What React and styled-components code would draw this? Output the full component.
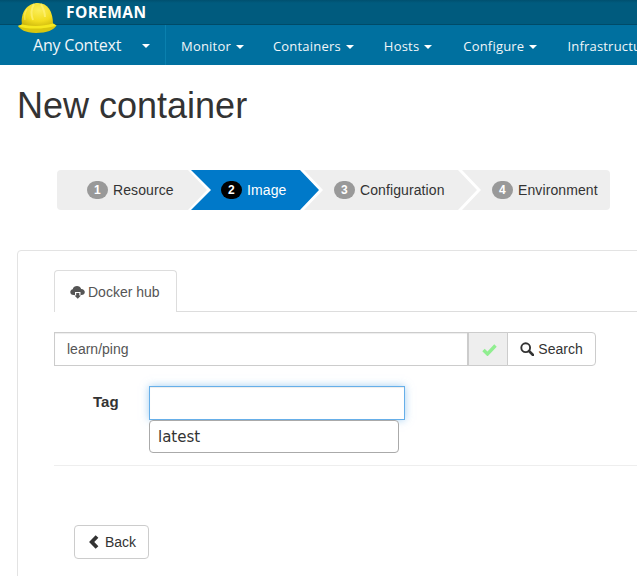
import React from 'react';
import styled, { createGlobalStyle } from 'styled-components';

const GlobalStyle = createGlobalStyle`
  html, body {
    margin: 0;
    background: #fff;
    overflow: hidden;
  }
  body {
    font-family: "Liberation Sans", Arial, sans-serif;
    font-size: 14px;
    color: #363636;
  }
`;

const Page = styled('div')`
  width: 637px;
  height: 576px;
  overflow: hidden;
  position: relative;
`;

const Helmet = styled('svg')`
  position: absolute;
  left: 17px;
  top: 1px;
`;

const TopBar = styled('div')`
  height: 24px;
  background: linear-gradient(#00506f 0, #005b7e 3px, #005b7e 100%);
  border-bottom: 1px solid #004b68;
  box-sizing: content-box;
  display: flex;
  align-items: center;
  padding-left: 66px;
`;

const Brand = styled('span')`
  font-family: "Open Sans", sans-serif;
  font-weight: 700;
  font-size: 15.5px;
  letter-spacing: 0.4px;
  color: #fff;
`;

const NavBar = styled('nav')`
  height: 40px;
  background: #00709f;
  display: flex;
  align-items: stretch;
  white-space: nowrap;
  font-family: "Open Sans", sans-serif;
  color: #f1f6f9;
`;

const ContextMenu = styled('div')`
  flex-shrink: 0;
  width: 132px;
  padding-left: 33px;
  border-right: 1px solid #0a80ae;
  display: flex;
  align-items: center;
  font-size: 16px;
  font-weight: 500;
  letter-spacing: -0.2px;
`;

const Caret = styled('i')`
  display: inline-block;
  width: 0;
  height: 0;
  margin-left: ${p => p.$gap || 5}px;
  margin-top: 2px;
  border-left: 4px solid transparent;
  border-right: 4px solid transparent;
  border-top: 4px solid #fff;
`;

const NavItem = styled('div')`
  flex-shrink: 0;
  display: flex;
  align-items: center;
  padding-top: 1px;
  font-size: 13px;
  font-weight: 500;
  letter-spacing: 0.2px;
  margin-left: ${p => p.$left}px;
`;

const Title = styled('h1')`
  margin: 0;
  padding: 20px 0 0 17px;
  font-size: 36px;
  line-height: 42px;
  font-weight: 400;
  color: #333;
`;

const Wizard = styled('ol')`
  list-style: none;
  margin: 43px 0 0 57px;
  padding: 0;
  display: flex;
  width: 553px;
  height: 40px;
`;

const Step = styled('li')`
  box-sizing: border-box;
  flex-shrink: 0;
  width: ${p => p.$width}px;
  margin-left: ${p => p.$overlap || 0}px;
  padding-left: ${p => p.$pad}px;
  display: flex;
  align-items: center;
  gap: 5px;
  letter-spacing: 0.1px;
  background: ${p => p.$active ? '#0079c9' : '#eee'};
  color: ${p => p.$active ? '#fff' : '#333'};
  border-radius: ${p => p.$radius || '0'};
  clip-path: ${p => p.$shape};
`;

const Badge = styled('span')`
  width: 21px;
  height: 18px;
  border-radius: 9px;
  background: ${p => p.$active ? '#000' : '#999'};
  color: #fff;
  font-size: 12px;
  font-weight: 700;
  line-height: 18px;
  text-align: center;
`;

const Panel = styled('section')`
  margin: 40px 0 0 17px;
  width: 640px;
  height: 340px;
  box-sizing: border-box;
  border: 1px solid #e3e3e3;
  border-radius: 4px;
  padding: 19px 0 0 36px;
`;

const Tabs = styled('div')`
  height: 42px;
  border-bottom: 1px solid #ddd;
  box-sizing: border-box;
`;

const Tab = styled('div')`
  box-sizing: border-box;
  width: 123px;
  height: 42px;
  border: 1px solid #ddd;
  border-bottom: 0;
  border-radius: 4px 4px 0 0;
  background: #fff;
  color: #555;
  display: flex;
  align-items: center;
  gap: 3px;
  padding-left: 15px;
`;

const SearchRow = styled('div')`
  display: flex;
  margin-top: 20px;
  height: 34px;
`;

const SearchInput = styled('div')`
  box-sizing: border-box;
  width: 414px;
  border: 1px solid #ccc;
  box-shadow: inset 0 1px 1px rgba(0, 0, 0, 0.075);
  padding-left: 12px;
  display: flex;
  align-items: center;
  color: #555;
`;

const Addon = styled('div')`
  box-sizing: border-box;
  width: 40px;
  padding-left: 3px;
  background: #eee;
  border: 1px solid #ccc;
  display: flex;
  align-items: center;
  justify-content: center;
`;

const SearchButton = styled('button')`
  box-sizing: border-box;
  width: 89px;
  padding: 0;
  margin-left: -1px;
  background: #fff;
  border: 1px solid #ccc;
  border-radius: 0 4px 4px 0;
  font: inherit;
  color: #333;
  display: flex;
  align-items: center;
  justify-content: center;
  gap: 4px;
`;

const TagRow = styled('div')`
  display: flex;
  margin-top: 20px;
  padding-bottom: 12px;
  border-bottom: 1px solid #eee;
`;

const TagLabel = styled('label')`
  width: 95px;
  padding: 7px 0 0 39px;
  box-sizing: border-box;
  font-size: 15px;
  font-weight: 700;
  line-height: 17px;
  color: #333;
`;

const TagField = styled('div')`
  display: flex;
  flex-direction: column;
`;

const TagInput = styled('div')`
  box-sizing: border-box;
  width: 256px;
  height: 34px;
  border: 1px solid #66afe9;
  box-shadow: inset 0 1px 1px rgba(0, 0, 0, 0.075), 0 0 8px rgba(102, 175, 233, 0.6);
  background: #fff;
`;

const Suggestion = styled('div')`
  box-sizing: border-box;
  width: 250px;
  height: 33px;
  border: 1px solid #aaa;
  border-radius: 4px;
  background: #fff;
  padding-left: 8px;
  display: flex;
  align-items: center;
  font-family: "DejaVu Sans", sans-serif;
  font-size: 15px;
  color: #333;
`;

const BackButton = styled('button')`
  box-sizing: border-box;
  width: 75px;
  height: 34px;
  margin: 59px 0 0 20px;
  padding: 0 0 0 14px;
  background: #fff;
  border: 1px solid #ccc;
  border-radius: 4px;
  font: inherit;
  color: #333;
  display: flex;
  align-items: center;
  gap: 5px;
`;

const HelmetIcon = () => (
  <Helmet width="41" height="33" viewBox="0 0 41 33">
    <defs>
      <radialGradient id="dome" cx="0.55" cy="0.3" r="0.8">
        <stop offset="0" stopColor="#fbee5a" />
        <stop offset="0.6" stopColor="#f2dc1e" />
        <stop offset="1" stopColor="#c9b40c" />
      </radialGradient>
    </defs>
    <path d="M1 25 C3 28 8 32 19 32 C30 32 37 29 39.500 24.500 L35 22 L6 23 Z" fill="#d8c70f" />
    <path d="M5 24 C3 12 10 2 21 2 C31 2 36 11 36 23 C26 26 14 26 5 24 Z" fill="url(#dome)" />
    <path d="M1 25 C10 29 30 28 39.500 24.500 L36 22.500 C26 25.500 14 25.500 5 23.500 Z" fill="#f6e81f" />
    <path d="M17 3 C14 8 14 14 16 19 M24 3 C26 7 28 11 28 16" stroke="#fff27a" strokeWidth="2" fill="none" opacity="0.7" />
    <path d="M10 8 C8 11 7 15 8 19" stroke="#fff27a" strokeWidth="1.500" fill="none" opacity="0.5" />
  </Helmet>
);

const CloudIcon = () => (
  <svg width="15" height="14" viewBox="0 0 15 14">
    <path
      d="M3.500 10 C1.500 10 0.300 8.700 0.300 7 C0.300 5.500 1.400 4.400 2.700 4.200 C3.200 2.200 5 1 7 1 C9 1 10.600 2.200 11.200 3.900 C13.200 3.800 14.800 5.200 14.800 7 C14.800 8.800 13.400 10 11.500 10 L10.500 10 L10.500 7 L5 7 L5 10 Z"
      fill="#555"
    />
    <path d="M6.200 8 L9.300 8 L9.300 10.500 L11 10.500 L7.750 13.800 L4.500 10.500 L6.200 10.500 Z" fill="#555" />
  </svg>
);

const CheckIcon = () => (
  <svg width="15" height="13" viewBox="0 0 15 13">
    <path d="M1.500 7 L5.500 11 L13.500 2.500" stroke="#90ee90" strokeWidth="3.400" fill="none" />
  </svg>
);

const SearchIcon = () => (
  <svg width="14" height="14" viewBox="0 0 14 14">
    <circle cx="5.700" cy="5.700" r="4.400" stroke="#333" strokeWidth="1.900" fill="none" />
    <path d="M9 9 L13 13" stroke="#333" strokeWidth="2.500" strokeLinecap="round" />
  </svg>
);

const ChevronIcon = () => (
  <svg width="11" height="14" viewBox="0 0 11 14">
    <path d="M8 1.500 L2.700 7 L8 12.500" stroke="#333" strokeWidth="3.800" fill="none" />
  </svg>
);

const tip = 'calc(100% - 19px) 0, 100% 50%, calc(100% - 19px) 100%';
const steps = [
  { n: 1, label: 'Resource', width: 150, pad: 30, overlap: 0, radius: '4px 0 0 4px', shape: `polygon(0 0, ${tip}, 0 100%)` },
  { n: 2, label: 'Image', width: 128, pad: 30, overlap: -16, active: true, shape: `polygon(0 0, ${tip}, 0 100%, 20px 50%)` },
  { n: 3, label: 'Configuration', width: 173, pad: 30, overlap: -15, shape: `polygon(0 0, ${tip}, 0 100%, 19px 50%)` },
  { n: 4, label: 'Environment', width: 148, pad: 30, overlap: -15, radius: '0 4px 4px 0', shape: 'polygon(0 0, 100% 0, 100% 100%, 0 100%, 19px 50%)' },
];

const menu = [
  { label: 'Monitor', left: 15 },
  { label: 'Containers', left: 29 },
  { label: 'Hosts', left: 30 },
  { label: 'Configure', left: 31 },
  { label: 'Infrastructure', left: 30 },
];

export default function App() {
  return (
    <Page>
      <GlobalStyle />
      <TopBar>
        <Brand>FOREMAN</Brand>
      </TopBar>
      <NavBar>
        <ContextMenu>
          Any Context
          <Caret $gap={21} />
        </ContextMenu>
        {menu.map(item => (
          <NavItem key={item.label} $left={item.left}>
            {item.label}
            <Caret />
          </NavItem>
        ))}
      </NavBar>
      <HelmetIcon />
      <Title>New container</Title>
      <Wizard>
        {steps.map(s => (
          <Step
            key={s.n}
            $width={s.width}
            $pad={s.pad}
            $overlap={s.overlap}
            $active={s.active}
            $radius={s.radius}
            $shape={s.shape}
          >
            <Badge $active={s.active}>{s.n}</Badge>
            {s.label}
          </Step>
        ))}
      </Wizard>
      <Panel>
        <Tabs>
          <Tab>
            <CloudIcon />
            Docker hub
          </Tab>
        </Tabs>
        <SearchRow>
          <SearchInput>learn/ping</SearchInput>
          <Addon>
            <CheckIcon />
          </Addon>
          <SearchButton>
            <SearchIcon />
            Search
          </SearchButton>
        </SearchRow>
        <TagRow>
          <TagLabel>Tag</TagLabel>
          <TagField>
            <TagInput />
            <Suggestion>latest</Suggestion>
          </TagField>
        </TagRow>
        <BackButton>
          <ChevronIcon />
          Back
        </BackButton>
      </Panel>
    </Page>
  );
}
